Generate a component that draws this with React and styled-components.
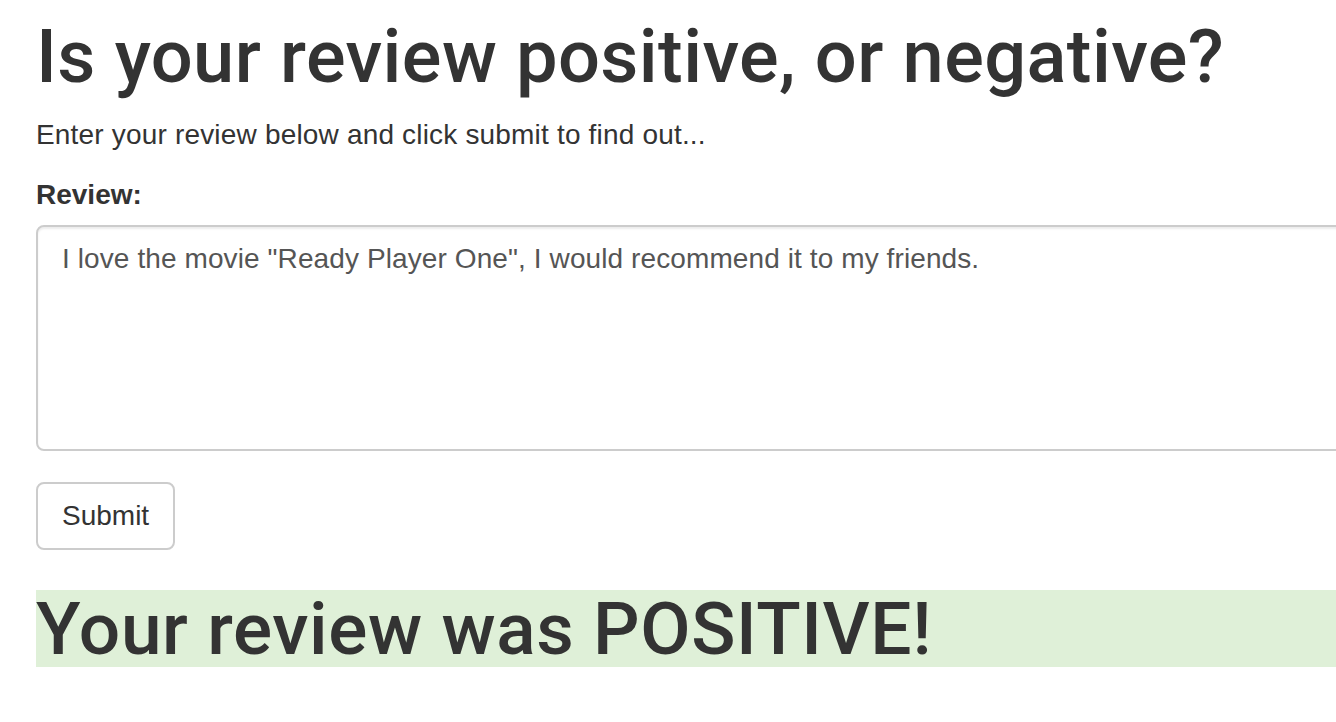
import * as React from "react";
import styled, { createGlobalStyle } from "styled-components";

const GlobalStyle = createGlobalStyle`
  html, body {
    margin: 0;
    padding: 0;
    background: #fff;
    overflow: hidden;
  }

  body {
    font-family: "Liberation Sans", Arial, Helvetica, sans-serif;
    font-size: 28px;
    line-height: 40px;
    color: #333;
  }

  * {
    box-sizing: border-box;
  }
`;

const Container = styled("div")`
  padding: 16px 0 0 36px;
  width: 1440px;
`;

const Title = styled("h1")`
  margin: 0 0 18px;
  font-family: Roboto, "Liberation Sans", sans-serif;
  font-size: 74px;
  letter-spacing: 0.4px;
  line-height: 1.1;
  font-weight: 500;
  color: #333;
`;

const Lead = styled("p")`
  margin: 0 0 20px;
  letter-spacing: 0.18px;
`;

const Form = styled("form")`
  display: flex;
  flex-direction: column;
  align-items: flex-start;
`;

const Label = styled("label")`
  display: block;
  margin-bottom: 10px;
  font-weight: 700;
`;

const FormGroup = styled("div")`
  width: 100%;
  margin-bottom: 31px;
`;

const TextArea = styled("textarea")`
  display: block;
  width: 100%;
  height: 226px;
  padding: 12px 24px;
  border: 2px solid #ccc;
  border-radius: 8px;
  box-shadow: inset 0 2px 2px rgba(0, 0, 0, 0.075);
  font-family: inherit;
  font-size: 28px;
  letter-spacing: 0.1px;
  line-height: 40px;
  color: #555;
  background: #fff;
  resize: none;
  outline: none;
`;

const Button = styled("button")`
  height: 68px;
  padding: 12px 24px;
  border: 2px solid #ccc;
  border-radius: 8px;
  background: #fff;
  font-family: inherit;
  font-size: 28px;
  line-height: 40px;
  color: #333;
  cursor: pointer;
`;

const Result = styled("h1")`
  margin: 40px 0 0;
  height: 77px;
  font-family: Roboto, "Liberation Sans", sans-serif;
  font-size: 73px;
  letter-spacing: 0.6px;
  line-height: 79px;
  font-weight: 500;
  color: #333;
  background-color: ${(props) => (props.positive ? "#dff0d8" : "#f2dede")};
`;

export default function App() {
  const [review, setReview] = React.useState(
    'I love the movie "Ready Player One", I would recommend it to my friends.'
  );

  return (
    <>
      <GlobalStyle />
      <Container>
        <Title>Is your review positive, or negative?</Title>
        <Lead>Enter your review below and click submit to find out...</Lead>
        <Form onSubmit={(e) => e.preventDefault()}>
          <FormGroup>
            <Label htmlFor="review">Review:</Label>
            <TextArea
              id="review"
              value={review}
              onChange={(e) => setReview(e.target.value)}
            />
          </FormGroup>
          <Button type="submit">Submit</Button>
        </Form>
        <Result positive>Your review was POSITIVE!</Result>
      </Container>
    </>
  );
}
